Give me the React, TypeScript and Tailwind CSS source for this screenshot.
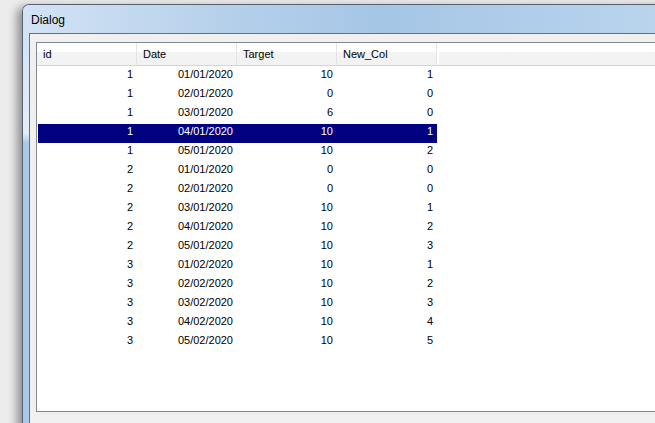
import React from 'react';

type Row = { id: number; date: string; target: number; newCol: number };

const rows: Row[] = [
  { id: 1, date: '01/01/2020', target: 10, newCol: 1 },
  { id: 1, date: '02/01/2020', target: 0, newCol: 0 },
  { id: 1, date: '03/01/2020', target: 6, newCol: 0 },
  { id: 1, date: '04/01/2020', target: 10, newCol: 1 },
  { id: 1, date: '05/01/2020', target: 10, newCol: 2 },
  { id: 2, date: '01/01/2020', target: 0, newCol: 0 },
  { id: 2, date: '02/01/2020', target: 0, newCol: 0 },
  { id: 2, date: '03/01/2020', target: 10, newCol: 1 },
  { id: 2, date: '04/01/2020', target: 10, newCol: 2 },
  { id: 2, date: '05/01/2020', target: 10, newCol: 3 },
  { id: 3, date: '01/02/2020', target: 10, newCol: 1 },
  { id: 3, date: '02/02/2020', target: 10, newCol: 2 },
  { id: 3, date: '03/02/2020', target: 10, newCol: 3 },
  { id: 3, date: '04/02/2020', target: 10, newCol: 4 },
  { id: 3, date: '05/02/2020', target: 10, newCol: 5 },
];

const columns = ['id', 'Date', 'Target', 'New_Col'];
const selectedIndex = 3;

const HeaderCell: React.FC<{ label?: string; grow?: boolean }> = ({ label, grow }) => (
  <div
    className={`${grow ? 'flex-1' : 'w-[100px] border-r border-[#e3e4e6]'} h-full pl-[6px] pt-[1px] leading-[21px] text-black`}
  >
    {label}
  </div>
);

const App: React.FC = () => {
  return (
    <div
      className="w-[655px] h-[423px] overflow-hidden bg-[#ececec] pl-[22px] pt-[4px]"
      style={{ fontFamily: '"Liberation Sans", Arial, sans-serif' }}
    >
      <div className="w-[720px] h-[440px] flex flex-col rounded-tl-[7px] border-l border-t border-[#56626f] bg-[linear-gradient(180deg,#cddff2_0px,#e4eef9_128px,#aac9e8_138px,#aac9e8_100%)] shadow-[-5px_3px_10px_rgba(0,0,0,0.4)]">
        {/* title bar */}
        <div className="h-[28px] pl-[8px] flex items-center rounded-tl-[6px] bg-[linear-gradient(90deg,#d3e3f4_0%,#b4cfea_30%,#a6c6e6_50%,#b2cfeb_75%,#c2d8ee_100%)]">
          <span className="text-[12px] text-black pt-[1px]">Dialog</span>
        </div>

        {/* client area */}
        <div className="flex-1 pl-[6px] flex">
          <div className="flex-1 border-l border-t border-[#66707c] bg-[#f0f0f0] pl-[6px] pt-[8px]">
            <div className="h-[370px] border border-[#828790] bg-white text-[11px] flex flex-col">
              <div className="h-[23px] flex border-b border-[#d5d5d5] bg-[linear-gradient(180deg,#ffffff_0%,#ffffff_42%,#f3f3f4_43%,#f1f2f3_100%)]">
                {columns.map((c) => (
                  <HeaderCell key={c} label={c} />
                ))}
                <div className="w-[2px] h-full bg-white" />
                <HeaderCell grow />
              </div>

              <div className="pt-[1px] pl-[1px]">
                {rows.map((r, i) => {
                  const sel = i === selectedIndex;
                  return (
                    <div
                      key={i}
                      className={`w-[399px] h-[19px] flex leading-[15px] ${sel ? 'bg-[#000080] text-white' : 'text-black'}`}
                    >
                      <div className="w-[99px] text-right pr-[4px]">{r.id}</div>
                      <div className="w-[100px] text-right pr-[4px]">{r.date}</div>
                      <div className="w-[100px] text-right pr-[4px]">{r.target}</div>
                      <div className="w-[100px] text-right pr-[4px]">{r.newCol}</div>
                    </div>
                  );
                })}
              </div>
            </div>
          </div>
        </div>
      </div>
    </div>
  );
};

export default App;
